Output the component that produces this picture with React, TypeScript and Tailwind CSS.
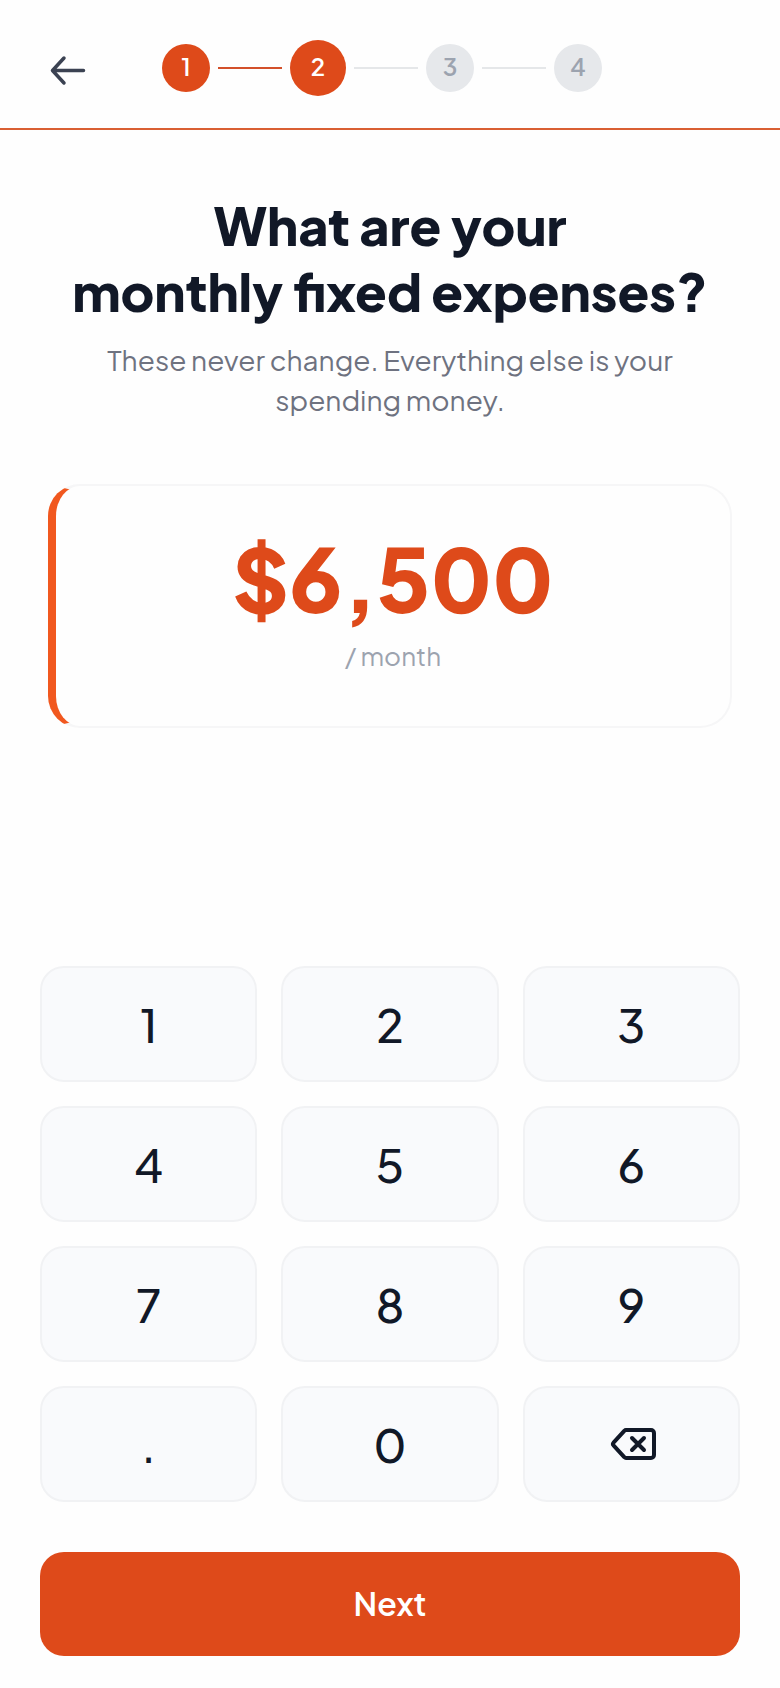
import React, { useState } from 'react'

const STEPS = [1, 2, 3, 4]
const KEYS = ['1', '2', '3', '4', '5', '6', '7', '8', '9', '.', '0', 'del']

function ArrowIcon() {
  return (
    <svg width="40" height="40" viewBox="0 0 40 40" fill="none" stroke="currentColor" strokeWidth="3.5" strokeLinecap="round" strokeLinejoin="round">
      <path d="M35.500 22.500H5M16 10L4.500 22.500l11.500 12.500" />
    </svg>
  )
}

function BackspaceIcon() {
  return (
    <svg width="52" height="36" viewBox="-5 -2 52 36" fill="none" stroke="currentColor" strokeWidth="4" strokeLinecap="round" strokeLinejoin="round">
      <path d="M16 2H41a3 3 0 0 1 3 3V27a3 3 0 0 1-3 3H16a2 2 0 0 1-1.500-.7L3.500 17.300a2 2 0 0 1 0-2.600L14.500 2.700A2 2 0 0 1 16 2Z" />
      <path d="M22 10l12 12M34 10L22 22" />
    </svg>
  )
}

function Stepper({ current }: { current: number }) {
  return (
    <ol className="flex items-center gap-2">
      {STEPS.map(step => (
        <React.Fragment key={step}>
          {step > 1 && (
            <li aria-hidden="true" className={`h-[2px] w-16 ${step <= current ? 'bg-[#d3502a]' : 'bg-[#e5e7e9]'}`} />
          )}
          <li
            aria-current={step === current ? 'step' : undefined}
            className={`flex items-center justify-center rounded-full pb-1 text-2xl font-semibold ${
              step === current ? 'size-14' : 'size-12'
            } ${step <= current ? 'bg-[#de4a1a] text-white' : 'bg-[#e6e8eb] text-[#9ca3af]'}`}
          >
            {step}
          </li>
        </React.Fragment>
      ))}
    </ol>
  )
}

export default function App() {
  const [value, setValue] = useState('6500')

  const press = (key: string) => {
    if (key === 'del') {
      setValue(v => v.slice(0, -1))
    } else if (key === '.') {
      setValue(v => (v.includes('.') ? v : v + '.'))
    } else {
      setValue(v => (v.length < 8 ? v + key : v))
    }
  }

  const [whole, cents] = value.split('.')
  const amount = '$' + Number(whole || 0).toLocaleString('en-US') + (cents !== undefined ? '.' + cents : '')

  return (
    <div className="flex min-h-screen flex-col bg-[#fefefe] font-['Plus_Jakarta_Sans',Inter,sans-serif] text-[#111827]">
      <header className="flex items-center border-b-2 border-[#d95f33] px-12 pt-10 pb-8">
        <button type="button" aria-label="Back" className="mr-[74px] text-[#3b4252]">
          <ArrowIcon />
        </button>
        <Stepper current={2} />
      </header>

      <main className="flex flex-1 flex-col">
        <div className="px-12 pt-[62px] text-center">
          <h1 className="text-[52px] leading-[66px] font-extrabold">
            What are your
            <br />
            monthly fixed expenses?
          </h1>
          <p className="mx-auto mt-4 max-w-[620px] text-[28px] leading-10 text-[#6e7280]">
            These never change. Everything else is your spending money.
          </p>
        </div>

        <section className="mx-12 mt-16 rounded-[32px] border-2 border-l-8 border-[#f6f6f7] border-l-[#f1581f] bg-[#fefefe] pt-9 pb-[54px] text-center">
          <output className="block text-[88px] leading-[112px] font-extrabold text-[#de4a1a]">{amount}</output>
          <p className="mt-1.5 text-[26px] leading-8 text-[#9ca3af]">/ month</p>
        </section>

        <div className="mt-auto px-10 pb-8">
          <div className="grid grid-cols-3 gap-6">
            {KEYS.map(key => (
              <button
                key={key}
                type="button"
                onClick={() => press(key)}
                aria-label={key === 'del' ? 'Delete' : undefined}
                className="flex h-[116px] items-center justify-center rounded-3xl border-2 border-[#f1f2f4] bg-[#f9fafc] text-[46px] font-medium active:bg-[#f1f2f4]"
              >
                {key === 'del' ? <BackspaceIcon /> : key}
              </button>
            ))}
          </div>
          <button type="button" className="mt-[50px] h-[104px] w-full rounded-3xl bg-[#de4a1a] pb-0.5 text-[32px] font-semibold text-white">
            Next
          </button>
        </div>
      </main>
    </div>
  )
}
